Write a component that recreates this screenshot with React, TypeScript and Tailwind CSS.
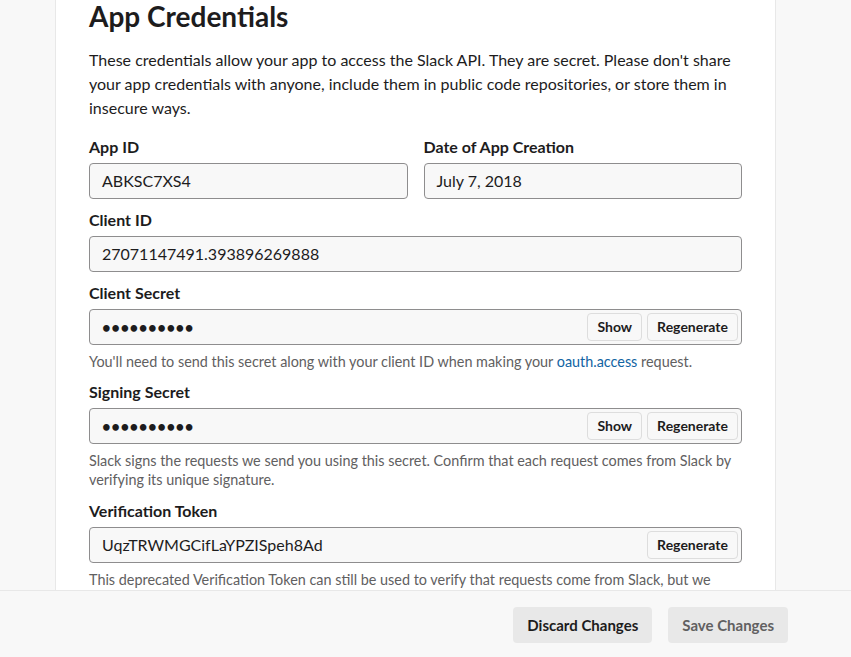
import React from "react";

const font = { fontFamily: "Lato, 'Noto Sans', sans-serif" };

function SmallBtn({ children }: { children: React.ReactNode }) {
  return (
    <button className="h-[28px] px-[9px] rounded-[4px] border border-[#dddddd] bg-[#f8f8f8] text-[14px] font-bold text-[#1d1c1d] leading-none">
      {children}
    </button>
  );
}

function Input({
  value,
  secret,
  show,
  regen,
}: {
  value: string;
  secret?: boolean;
  show?: boolean;
  regen?: boolean;
}) {
  return (
    <div className="h-[36px] flex items-center rounded-[4px] border border-[#8e8d8e] bg-[#f8f8f8] pl-[12px] pr-[3px]">
      <span
        className={
          secret
            ? "flex-1 text-[15px] text-[#1d1c1d] tracking-[0.5px] font-bold"
            : "flex-1 text-[16px] text-[#1d1c1d]"
        }
      >
        {value}
      </span>
      <div className="flex gap-[5px]">
        {show && <SmallBtn>Show</SmallBtn>}
        {regen && <SmallBtn>Regenerate</SmallBtn>}
      </div>
    </div>
  );
}

function Label({ children }: { children: React.ReactNode }) {
  return (
    <div className="text-[16px] leading-[22px] font-bold text-[#1d1c1d] mb-[5px]">
      {children}
    </div>
  );
}

function Help({ children }: { children: React.ReactNode }) {
  return (
    <div className="mt-[7px] text-[14.4px] leading-[19px] text-[#616061]">
      {children}
    </div>
  );
}

export default function App() {
  return (
    <div className="h-[657px] w-[851px] flex flex-col bg-[#f8f8f8] overflow-hidden" style={font}>
      <div className="flex-1 overflow-hidden">
        <div className="ml-[55px] w-[721px] h-full bg-white border-x border-[#e8e8e8] px-[33px] pb-[40px]">
          <h2 className="text-[28px] leading-[32px] font-bold text-[#1d1c1d]">App Credentials</h2>
          <p className="mt-[16px] text-[16px] leading-[24px] text-[#1d1c1d]">
            These credentials allow your app to access the Slack API. They are secret. Please don't share your app
            credentials with anyone, include them in public code repositories, or store them in insecure ways.
          </p>
          <div className="mt-[16px] grid grid-cols-2 gap-x-[16px]">
            <div>
              <Label>App ID</Label>
              <Input value="ABKSC7XS4" />
            </div>
            <div>
              <Label>Date of App Creation</Label>
              <Input value="July 7, 2018" />
            </div>
          </div>
          <div className="mt-[10px]">
            <Label>Client ID</Label>
            <Input value="27071147491.393896269888" />
          </div>
          <div className="mt-[10px]">
            <Label>Client Secret</Label>
            <Input value="••••••••••" secret show regen />
            <Help>
              You'll need to send this secret along with your client ID when making your{" "}
              <span className="text-[#1264a3]">oauth.access</span> request.
            </Help>
          </div>
          <div className="mt-[10px]">
            <Label>Signing Secret</Label>
            <Input value="••••••••••" secret show regen />
            <Help>
              Slack signs the requests we send you using this secret. Confirm that each request comes from Slack by
              verifying its unique signature.
            </Help>
          </div>
          <div className="mt-[11px]">
            <Label>Verification Token</Label>
            <Input value="UqzTRWMGCifLaYPZISpeh8Ad" regen />
            <Help>
              This deprecated Verification Token can still be used to verify that requests come from Slack, but we
              strongly recommend using the above, more secure, signing secret instead.
            </Help>
          </div>
        </div>
      </div>
      <div className="h-[67px] shrink-0 border-t border-[#e8e8e8] bg-[#f8f8f8] flex items-start justify-end gap-[16px] pt-[16px] pr-[63px]">
        <button className="h-[36px] px-[14px] rounded-[4px] bg-[#e8e8e8] text-[15px] font-bold text-[#1d1c1d]">
          Discard Changes
        </button>
        <button className="h-[36px] px-[14px] rounded-[4px] bg-[#e8e8e8] text-[15px] font-bold text-[#616061]">
          Save Changes
        </button>
      </div>
    </div>
  );
}
